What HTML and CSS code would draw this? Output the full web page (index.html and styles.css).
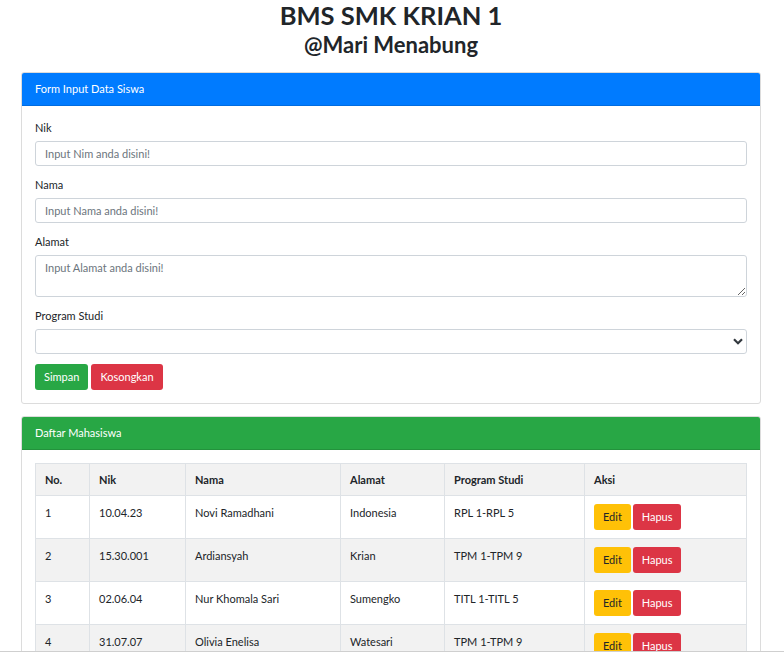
FILE: index.html
```html
<!DOCTYPE html>
<html>
<head>
<meta charset="utf-8">
<link rel="stylesheet" href="styles.css">
</head>
<body>
<div class="page">
  <h1 class="title">BMS SMK KRIAN 1</h1>
  <h2 class="subtitle">@Mari Menabung</h2>

  <div class="card">
    <div class="card-header header-blue">Form Input Data Siswa</div>
    <div class="card-body">
      <div class="form-group">
        <label class="label">Nik</label>
        <input class="control" type="text" placeholder="Input Nim anda disini!">
      </div>
      <div class="form-group">
        <label class="label">Nama</label>
        <input class="control" type="text" placeholder="Input Nama anda disini!">
      </div>
      <div class="form-group">
        <label class="label">Alamat</label>
        <textarea class="control textarea" placeholder="Input Alamat anda disini!"></textarea>
      </div>
      <div class="form-group">
        <label class="label">Program Studi</label>
        <div class="select-wrap">
          <select class="control select"><option></option></select>
          <svg class="chevron" width="10" height="7" viewBox="0 0 10 7"><path d="M1 1.2 L5 5.2 L9 1.2" fill="none" stroke="#343a40" stroke-width="2.2"/></svg>
        </div>
      </div>
      <div class="buttons">
        <button class="btn btn-green">Simpan</button>
        <button class="btn btn-red">Kosongkan</button>
      </div>
    </div>
  </div>

  <div class="card card-second">
    <div class="card-header header-green">Daftar Mahasiswa</div>
    <div class="card-body">
      <table class="table">
        <colgroup>
          <col class="c1"><col class="c2"><col class="c3"><col class="c4"><col class="c5"><col class="c6">
        </colgroup>
        <thead>
          <tr><th>No.</th><th>Nik</th><th>Nama</th><th>Alamat</th><th>Program Studi</th><th>Aksi</th></tr>
        </thead>
        <tbody>
          <tr><td>1</td><td>10.04.23</td><td>Novi Ramadhani</td><td>Indonesia</td><td>RPL 1-RPL 5</td><td><button class="btn btn-yellow">Edit</button> <button class="btn btn-red">Hapus</button></td></tr>
          <tr class="odd"><td>2</td><td>15.30.001</td><td>Ardiansyah</td><td>Krian</td><td>TPM 1-TPM 9</td><td><button class="btn btn-yellow">Edit</button> <button class="btn btn-red">Hapus</button></td></tr>
          <tr><td>3</td><td>02.06.04</td><td>Nur Khomala Sari</td><td>Sumengko</td><td>TITL 1-TITL 5</td><td><button class="btn btn-yellow">Edit</button> <button class="btn btn-red">Hapus</button></td></tr>
          <tr class="odd"><td>4</td><td>31.07.07</td><td>Olivia Enelisa</td><td>Watesari</td><td>TPM 1-TPM 9</td><td><button class="btn btn-yellow">Edit</button> <button class="btn btn-red">Hapus</button></td></tr>
        </tbody>
      </table>
    </div>
  </div>
</div>
<div class="bottom-edge"></div>
</body>
</html>
```

FILE: styles.css
```css
* { box-sizing: border-box; }
html, body { margin: 0; padding: 0; background: #fff; }
body {
  font-family: "Lato", "Open Sans", sans-serif;
  font-size: 11px;
  color: #212529;
  overflow: hidden;
  height: 654px;
}
.page { padding: 0 23px 0 21px; }
.title {
  margin: 0;
  text-align: center;
  font-family: "Lato", sans-serif;
  font-size: 25.5px;
  line-height: 31px;
  font-weight: 700;
}
.subtitle {
  margin: 0;
  padding-top: 2px;
  text-align: center;
  font-family: "Lato", sans-serif;
  font-size: 22px;
  line-height: 24px;
  font-weight: 700;
  height: 41px;
}
.card {
  border: 1px solid #dcdcdc;
  border-radius: 3px;
  background: #fff;
  overflow: hidden;
}
.card-second { margin-top: 12px; }
.card-header {
  color: #fff;
  padding: 8px 13px;
  line-height: 16px;
  height: 33px;
  border-bottom: 1px solid rgba(0,0,0,0.12);
}
.header-blue { background: #007bff; }
.header-green { background: #28a745; }
.card-body { padding: 13px; }
.form-group { margin-bottom: 10px; display: flex; flex-direction: column; }
.label { display: block; line-height: 18px; margin-bottom: 4px; }
.control {
  width: 100%;
  height: 25px;
  border: 1px solid #ced4da;
  border-radius: 3px;
  padding: 3px 9px;
  font-family: inherit;
  font-size: 11px;
  color: #495057;
  background: #fff;
}
.control::placeholder { color: #6c757d; }
.textarea { height: 42px; resize: vertical; display: block; padding-top: 5px; }
.select-wrap { position: relative; }
.select { appearance: none; -webkit-appearance: none; height: 25px; display: block; }
.chevron { position: absolute; right: 4px; top: 9px; }
.buttons { display: flex; gap: 3px; }
.btn {
  font-family: inherit;
  font-size: 11px;
  line-height: 16px;
  padding: 4px 8px;
  border: 1px solid transparent;
  border-radius: 3px;
  cursor: pointer;
}
.buttons .btn { height: 26px; }
.btn-green { background: #28a745; color: #fff; }
.btn-red { background: #dc3545; color: #fff; }
.btn-yellow { background: #ffc107; color: #212529; }
.table {
  width: 100%;
  border-collapse: collapse;
  table-layout: fixed;
}
.c1 { width: 54px; } .c2 { width: 96px; } .c3 { width: 155px; }
.c4 { width: 104px; } .c5 { width: 140px; } .c6 { width: auto; }
.table th, .table td {
  border: 1px solid #dee2e6;
  text-align: left;
  vertical-align: top;
  padding: 8px 9px;
  line-height: 18px;
}
.table th { background: #f2f2f2; font-weight: 700; line-height: 15px; }
.table td { height: 43px; }
.table tr.odd td { background: #f2f2f2; }
.table td .btn { height: 26px; padding: 4px 8px; margin-top: 0; }
.table td .btn + .btn { margin-left: -1px; }
.bottom-edge {
  position: fixed;
  left: 0; right: 0; bottom: 0;
  height: 3px;
  background: #fff;
  border-top: 1px solid #cfcfcf;
}
```
